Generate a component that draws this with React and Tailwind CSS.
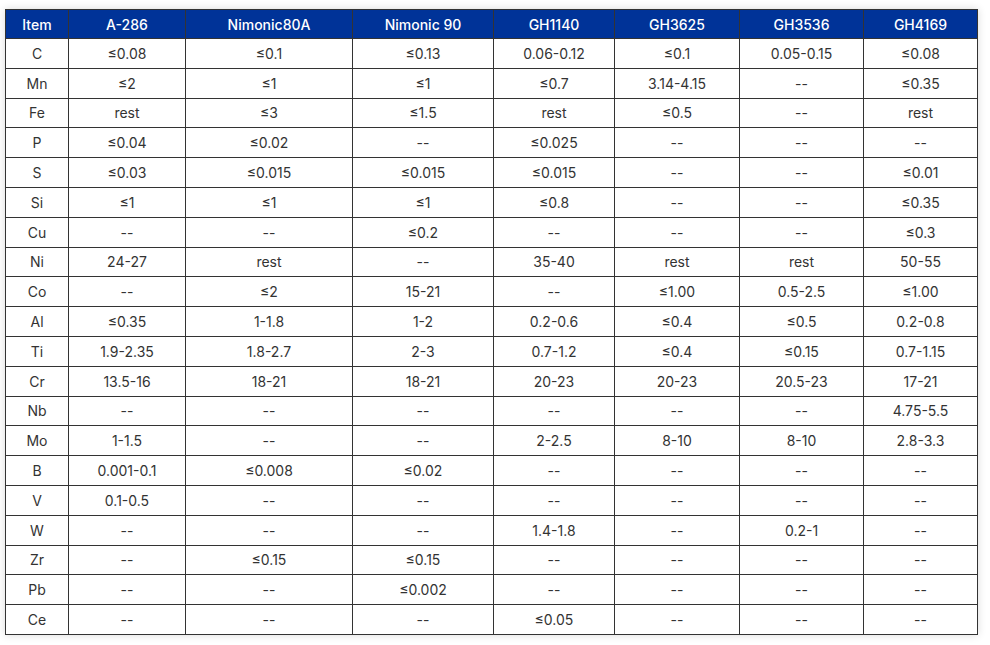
const cols = ['Item', 'A-286', 'Nimonic80A', 'Nimonic 90', 'GH1140', 'GH3625', 'GH3536', 'GH4169']
const widths = [63, 117, 167, 141, 121, 125, 124, 114]

const rows = [
  ['C', '≤0.08', '≤0.1', '≤0.13', '0.06-0.12', '≤0.1', '0.05-0.15', '≤0.08'],
  ['Mn', '≤2', '≤1', '≤1', '≤0.7', '3.14-4.15', '--', '≤0.35'],
  ['Fe', 'rest', '≤3', '≤1.5', 'rest', '≤0.5', '--', 'rest'],
  ['P', '≤0.04', '≤0.02', '--', '≤0.025', '--', '--', '--'],
  ['S', '≤0.03', '≤0.015', '≤0.015', '≤0.015', '--', '--', '≤0.01'],
  ['Si', '≤1', '≤1', '≤1', '≤0.8', '--', '--', '≤0.35'],
  ['Cu', '--', '--', '≤0.2', '--', '--', '--', '≤0.3'],
  ['Ni', '24-27', 'rest', '--', '35-40', 'rest', 'rest', '50-55'],
  ['Co', '--', '≤2', '15-21', '--', '≤1.00', '0.5-2.5', '≤1.00'],
  ['Al', '≤0.35', '1-1.8', '1-2', '0.2-0.6', '≤0.4', '≤0.5', '0.2-0.8'],
  ['Ti', '1.9-2.35', '1.8-2.7', '2-3', '0.7-1.2', '≤0.4', '≤0.15', '0.7-1.15'],
  ['Cr', '13.5-16', '18-21', '18-21', '20-23', '20-23', '20.5-23', '17-21'],
  ['Nb', '--', '--', '--', '--', '--', '--', '4.75-5.5'],
  ['Mo', '1-1.5', '--', '--', '2-2.5', '8-10', '8-10', '2.8-3.3'],
  ['B', '0.001-0.1', '≤0.008', '≤0.02', '--', '--', '--', '--'],
  ['V', '0.1-0.5', '--', '--', '--', '--', '--', '--'],
  ['W', '--', '--', '--', '1.4-1.8', '--', '0.2-1', '--'],
  ['Zr', '--', '≤0.15', '≤0.15', '--', '--', '--', '--'],
  ['Pb', '--', '--', '≤0.002', '--', '--', '--', '--'],
  ['Ce', '--', '--', '--', '≤0.05', '--', '--', '--'],
]

export default function App() {
  return (
    <div className="min-h-screen bg-white pl-[5px] pt-[9px] font-['Inter',sans-serif]">
      <table className="table-fixed border-collapse border border-[#333] text-[14px] shadow-[0_0_8px_rgba(0,0,0,0.15)]" style={{ width: 972 }}>
        <colgroup>
          {widths.map((w, i) => (
            <col key={i} style={{ width: w }} />
          ))}
        </colgroup>
        <thead>
          <tr className="h-[29px] bg-[#003398] text-white">
            {cols.map((c) => (
              <th key={c} className="border border-[#333] p-0 text-center font-medium">{c}</th>
            ))}
          </tr>
        </thead>
        <tbody>
          {rows.map((r) => (
            <tr key={r[0]} className="h-[29.8px] text-[#333]">
              {r.map((v, i) => (
                <td key={i} className="border border-[#333] p-0 text-center font-normal">{v}</td>
              ))}
            </tr>
          ))}
        </tbody>
      </table>
    </div>
  )
}
